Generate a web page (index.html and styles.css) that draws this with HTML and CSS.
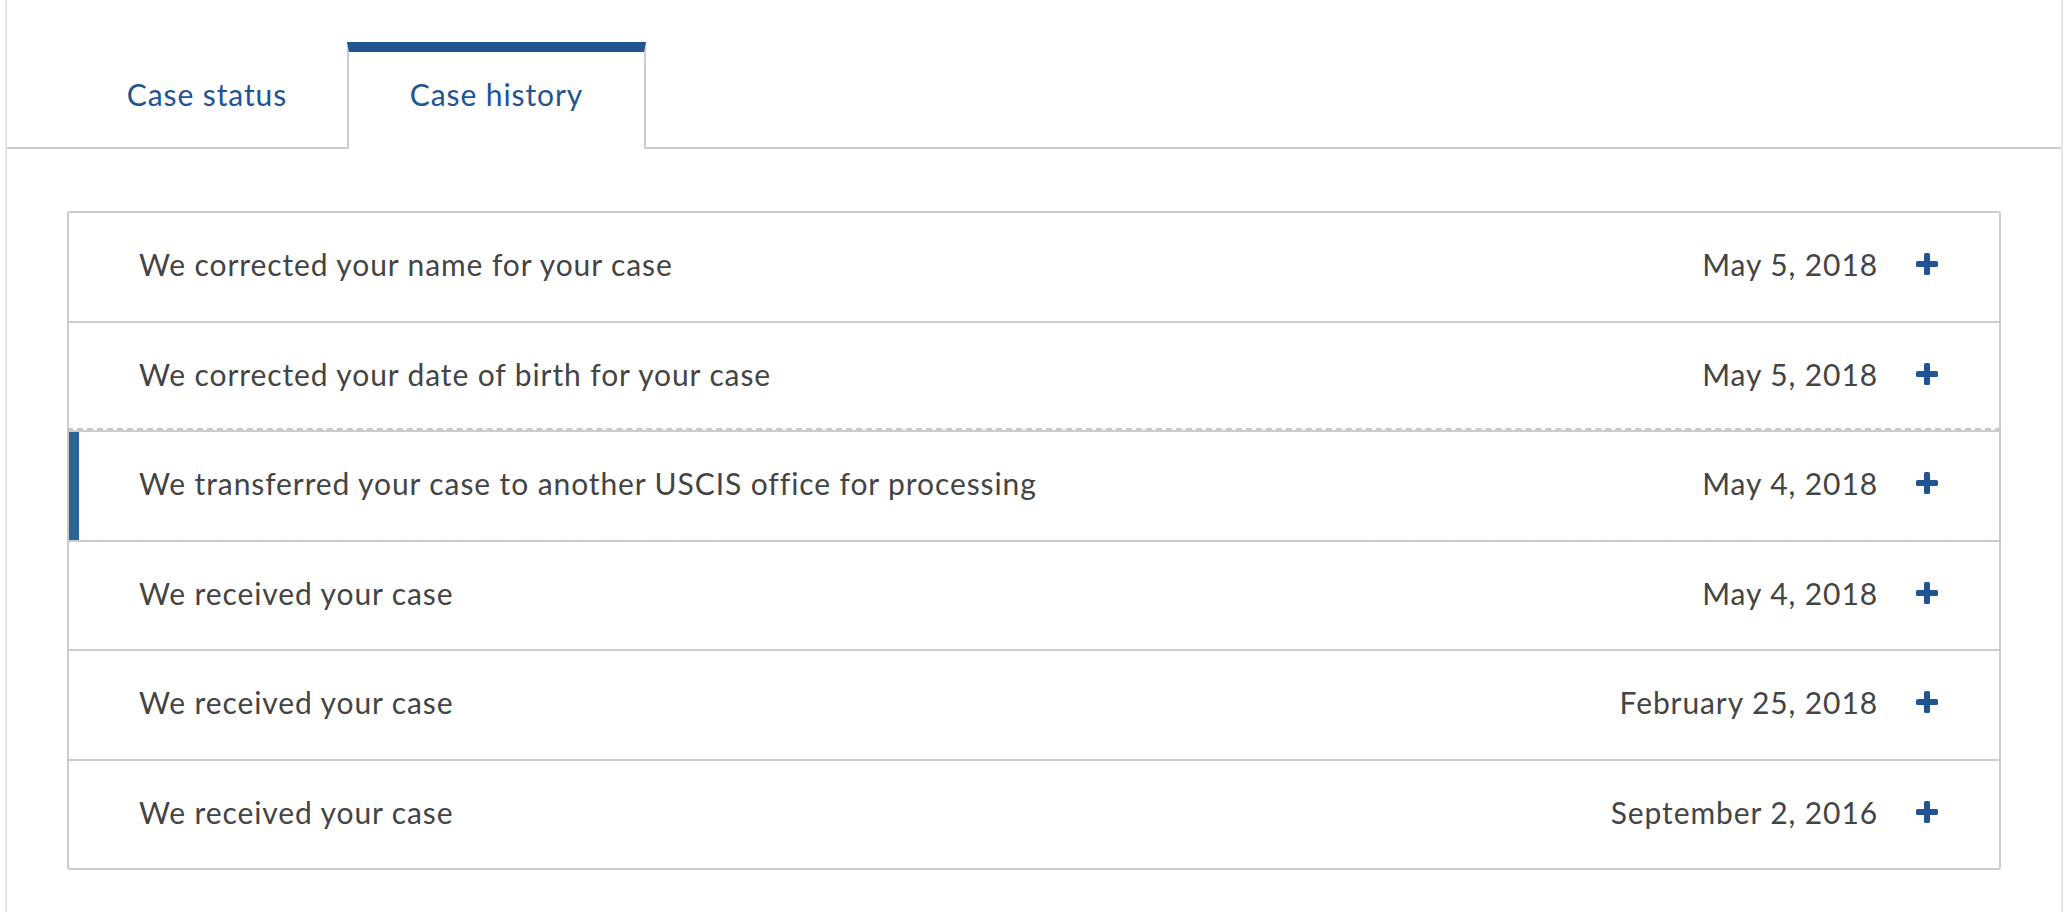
FILE: index.html
```html
<!DOCTYPE html>
<html lang="en">
<head>
<meta charset="utf-8">
<title>Case history</title>
<link rel="stylesheet" href="styles.css">
</head>
<body>
<div class="panel">
  <div class="tabs">
    <div class="tab">Case status</div>
    <div class="tab tab-active">Case history</div>
  </div>
  <div class="content">
    <ul class="history">
      <li class="row"><span class="title">We corrected your name for your case</span><span class="date">May 5, 2018</span><svg class="plus" viewBox="0 0 22 22"><rect x="8" y="0" width="6" height="22" rx="1.6"/><rect x="0" y="8" width="22" height="6" rx="1.6"/></svg></li>
      <li class="row"><span class="title">We corrected your date of birth for your case</span><span class="date">May 5, 2018</span><svg class="plus" viewBox="0 0 22 22"><rect x="8" y="0" width="6" height="22" rx="1.6"/><rect x="0" y="8" width="22" height="6" rx="1.6"/></svg></li>
      <li class="row row-focus"><span class="title">We transferred your case to another USCIS office for processing</span><span class="date">May 4, 2018</span><svg class="plus" viewBox="0 0 22 22"><rect x="8" y="0" width="6" height="22" rx="1.6"/><rect x="0" y="8" width="22" height="6" rx="1.6"/></svg></li>
      <li class="row"><span class="title">We received your case</span><span class="date">May 4, 2018</span><svg class="plus" viewBox="0 0 22 22"><rect x="8" y="0" width="6" height="22" rx="1.6"/><rect x="0" y="8" width="22" height="6" rx="1.6"/></svg></li>
      <li class="row"><span class="title">We received your case</span><span class="date">February 25, 2018</span><svg class="plus" viewBox="0 0 22 22"><rect x="8" y="0" width="6" height="22" rx="1.6"/><rect x="0" y="8" width="22" height="6" rx="1.6"/></svg></li>
      <li class="row"><span class="title">We received your case</span><span class="date">September 2, 2016</span><svg class="plus" viewBox="0 0 22 22"><rect x="8" y="0" width="6" height="22" rx="1.6"/><rect x="0" y="8" width="22" height="6" rx="1.6"/></svg></li>
    </ul>
  </div>
</div>
</body>
</html>
```
FILE: styles.css
```css
html, body {
  margin: 0;
  padding: 0;
  background: #ffffff;
}

body {
  font-family: Lato, "Liberation Sans", sans-serif;
  color: #444444;
  height: 912px;
  overflow: hidden;
}

.panel {
  margin-left: 5px;
  width: 2054px;
  min-height: 912px;
  border-left: 2px solid #e6e6e6;
  border-right: 2px solid #e6e6e6;
  padding-top: 42px;
  box-sizing: content-box;
}

.tabs {
  display: flex;
  align-items: flex-end;
  padding-left: 60px;
  border-bottom: 2px solid #cccccc;
  height: 105px;
}

.tab {
  width: 280px;
  height: 95px;
  display: flex;
  align-items: center;
  justify-content: center;
  padding-bottom: 12px;
  box-sizing: border-box;
  font-size: 30px;
  letter-spacing: 0.9px;
  color: #205493;
}

.tab-active {
  width: 299px;
  height: 107px;
  margin-bottom: -2px;
  background: #ffffff;
  border-top: 10px solid #205493;
  border-left: 2px solid #cccccc;
  border-right: 2px solid #cccccc;
  padding-bottom: 14px;
}

.content {
  padding: 62px 60px 0 60px;
}

.history {
  list-style: none;
  margin: 0;
  padding: 0;
  border: 2px solid #cccccc;
  border-radius: 3px;
}

.row {
  display: flex;
  align-items: center;
  padding: 0 61px 5px 70px;
  box-sizing: border-box;
  font-size: 30px;
  letter-spacing: 0.9px;
  border-top: 2px solid #cccccc;
  height: 109.5px;
}

.row:first-child {
  border-top: none;
  height: 107.5px;
}

.title {
  flex: 1;
}

.date {
  margin-right: 38px;
}

.plus {
  width: 22px;
  height: 22px;
  fill: #205493;
  flex: none;
}

.row-focus {
  box-shadow: inset 10px 0 0 #2b6495;
  outline: 2px dashed #c8c8c8;
  outline-offset: 0;
}
```
